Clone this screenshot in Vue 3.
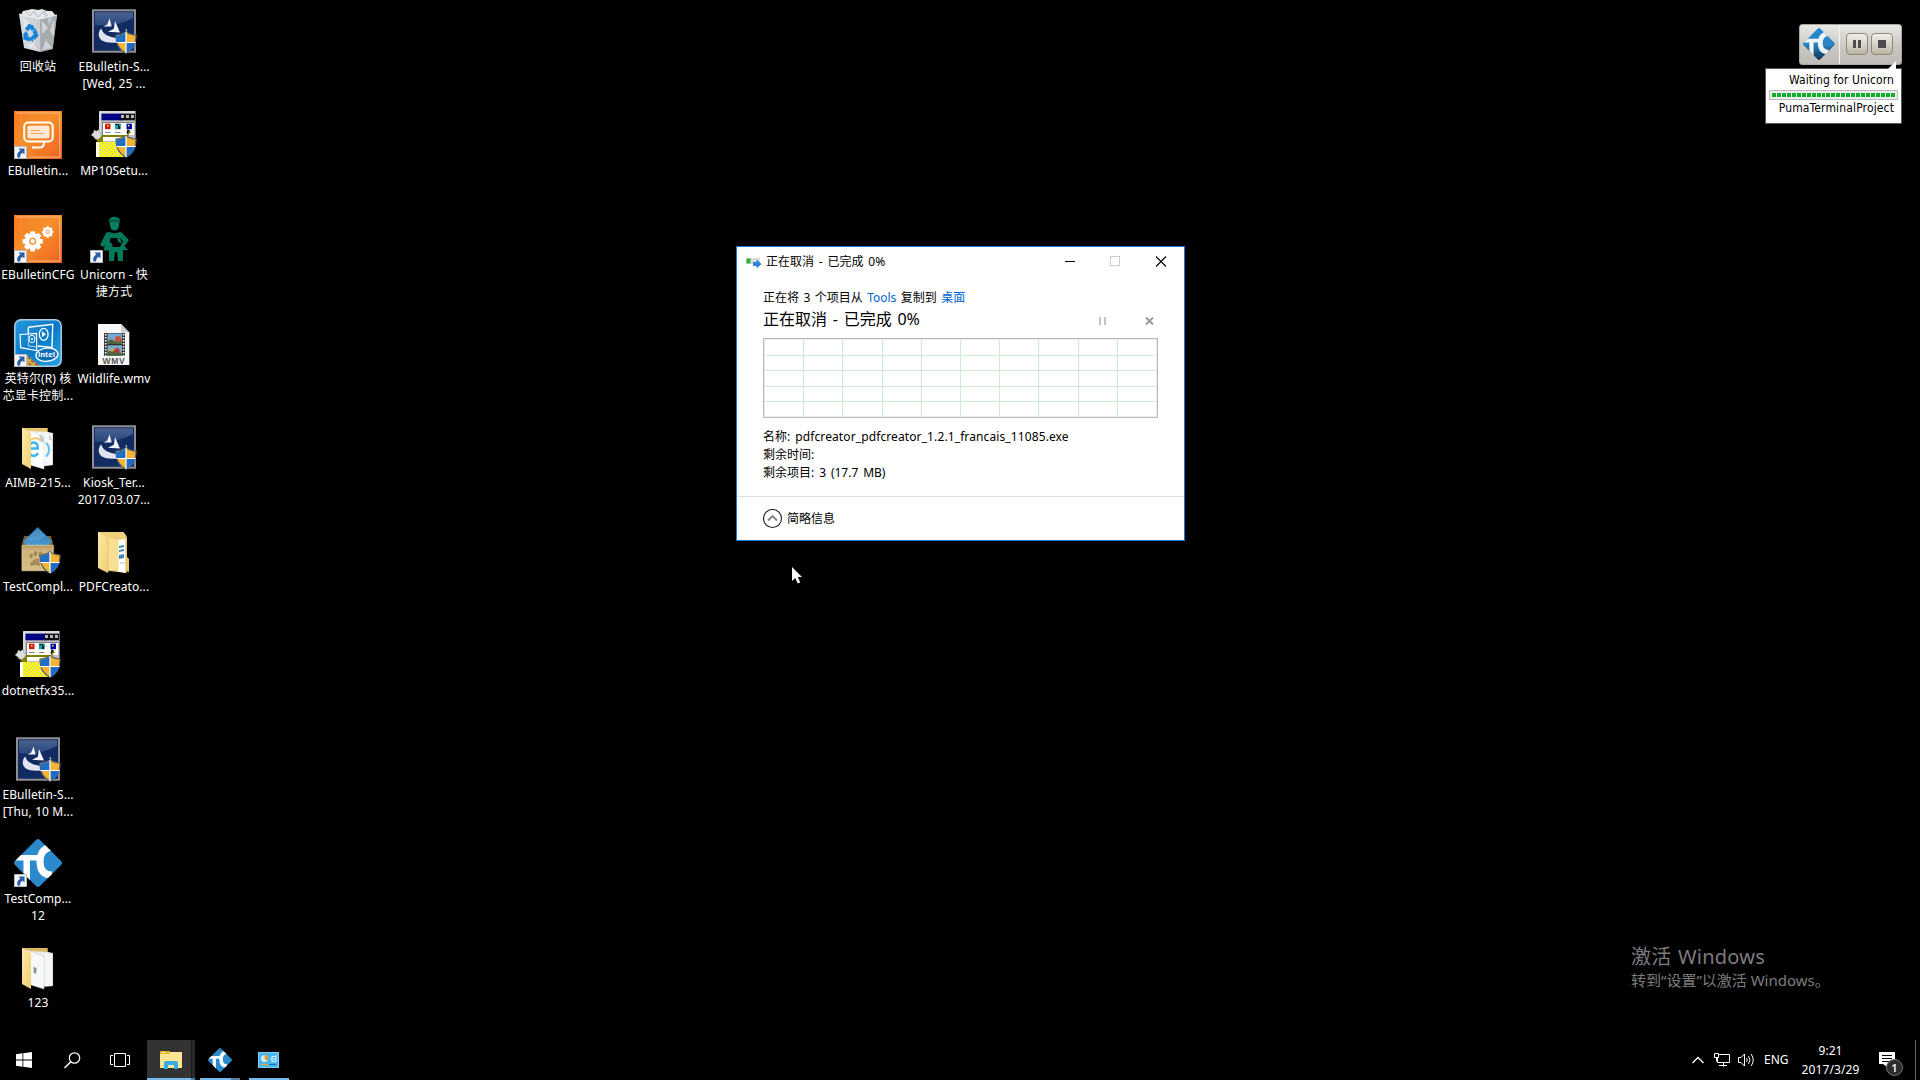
<script setup>
const columns = [
  [
    { icon: 'bin', lines: ['回收站'] },
    { icon: 'bulletin', lines: ['EBulletin...'], shortcut: true },
    { icon: 'config', lines: ['EBulletinCFG'], shortcut: true },
    { icon: 'intel', lines: ['英特尔(R) 核', '芯显卡控制...'], shortcut: true },
    { icon: 'folder-web', lines: ['AIMB-215...'] },
    { icon: 'package', lines: ['TestCompl...'], shield: true },
    { icon: 'setup', lines: ['dotnetfx35...'], shield: true },
    { icon: 'installer', lines: ['EBulletin-S...', '[Thu, 10 M...'], shield: true },
    { icon: 'tc', lines: ['TestComp...', '12'], shortcut: true },
    { icon: 'folder-doc', lines: ['123'] },
  ],
  [
    { icon: 'installer', lines: ['EBulletin-S...', '[Wed, 25 ...'], shield: true },
    { icon: 'setup', lines: ['MP10Setu...'], shield: true },
    { icon: 'unicorn', lines: ['Unicorn - 快', '捷方式'], shortcut: true },
    { icon: 'wmv', lines: ['Wildlife.wmv'] },
    { icon: 'installer', lines: ['Kiosk_Ter...', '2017.03.07...'], shield: true },
    { icon: 'folder-open', lines: ['PDFCreato...'] },
  ],
]
const gridX = [40, 79, 119, 158, 197, 236, 275, 315, 354]
const gridY = [17, 32, 48, 63]
const teeth = [0, 45, 90, 135, 180, 225, 270, 315]
</script>

<template>
  <div class="screen">
    <svg class="defs" width="0" height="0" aria-hidden="true">
      <defs>
        <linearGradient id="g-orange" x1="0" y1="0" x2="1" y2="1">
          <stop offset="0" stop-color="#f47a20" /><stop offset=".45" stop-color="#f68f2a" /><stop offset="1" stop-color="#ee6322" />
        </linearGradient>
        <linearGradient id="g-navy" x1="0" y1="0" x2="0" y2="1">
          <stop offset="0" stop-color="#4a6290" /><stop offset=".4" stop-color="#25427c" /><stop offset=".42" stop-color="#142c64" /><stop offset="1" stop-color="#1c3a78" />
        </linearGradient>
        <linearGradient id="g-intel" x1="0" y1="0" x2="1" y2="1">
          <stop offset="0" stop-color="#2a9be0" /><stop offset=".5" stop-color="#0879c4" /><stop offset="1" stop-color="#2aa4e4" />
        </linearGradient>
        <linearGradient id="g-flap" x1="0" y1="0" x2="1" y2="1">
          <stop offset="0" stop-color="#ffe9a6" /><stop offset="1" stop-color="#f0cf72" />
        </linearGradient>
        <linearGradient id="g-box" x1="0" y1="0" x2="0" y2="1">
          <stop offset="0" stop-color="#b8965a" /><stop offset=".2" stop-color="#cdb27a" /><stop offset="1" stop-color="#d8c08a" />
        </linearGradient>
        <linearGradient id="g-blue" x1="0" y1="0" x2="0" y2="1">
          <stop offset="0" stop-color="#2a71a8" /><stop offset="1" stop-color="#4d9bd4" />
        </linearGradient>
        <linearGradient id="g-tc" x1="0" y1="0" x2="0" y2="1">
          <stop offset="0" stop-color="#2188cf" /><stop offset=".5" stop-color="#2b86c2" /><stop offset="1" stop-color="#0b3354" />
        </linearGradient>
        <linearGradient id="g-bin" x1="0" y1="0" x2="1" y2="0">
          <stop offset="0" stop-color="#dcdfe2" /><stop offset=".55" stop-color="#c9cdd1" /><stop offset=".6" stop-color="#aeb3b8" /><stop offset="1" stop-color="#c6cacd" />
        </linearGradient>
        <pattern id="p-dots" width="4" height="4" patternUnits="userSpaceOnUse">
          <rect width="4" height="4" fill="#ff0" /><rect width="1.400" height="1.400" fill="#c0c0c0" /><rect x="2" y="2" width="1.400" height="1.400" fill="#c0c0c0" />
        </pattern>
        <clipPath id="c-diamond"><path d="M22 1Q24-1 26 1L47 22Q49 24 47 26L26 47Q24 49 22 47L1 26Q-1 24 1 22Z" /></clipPath>

        <symbol id="bin" viewBox="0 0 48 48">
          <path d="M7 8l2-4 5-1 4-1 6 1 4-1 5 2 5 0 4 5-8 5H12z" fill="#e4e7e9" />
          <path d="M12 5l4 4 4-5 4 6 6-6 4 5M9 8l8 3M29 4l3 6" fill="none" stroke="#b4b9bd" stroke-width="1" />
          <path d="M5 7l21 5 17-4-4.300 34L26 45 10 41z" fill="url(#g-bin)" />
          <path d="M26 12l17-4-4.300 34L26 45z" fill="#9fa5aa" opacity=".7" />
          <path d="M8 10l8 6-5 6zM28 14l6 7-6 6zM40 12l-4 12 4 6zM13 40l6-5 5 8zM28 43l4-10 6 8zM34 12l4-2-3 8z" fill="#f1f3f4" opacity=".55" />
          <path d="M5 7l21 5 17-4" fill="none" stroke="#eceeef" stroke-width="1.200" />
          <g fill="none" stroke="#1683d8" stroke-width="4.200"><path d="M12.500 23l3-3.800 3.500 1.500" /><path d="M20.500 23.500l1.500 5-3 3" /><path d="M16.500 32.500l-5-1.500.2-4" /></g>
          <path d="M17.500 18l5 5-5.500.5zM19 28v7l-4-3zM8.500 28l3.500-4 3 4.500z" fill="#1683d8" />
        </symbol>
        <symbol id="bulletin" viewBox="0 0 48 48">
          <rect width="48" height="48" fill="url(#g-orange)" />
          <path d="M7 0v48M0 9h48M17 0v9" stroke="#f8a04a" stroke-width=".6" opacity=".6" />
          <path d="M2 2h43.700v44H14" fill="none" stroke="#fbc08a" stroke-width=".9" />
          <rect x="10.200" y="11.500" width="28.500" height="19" rx="4" fill="none" stroke="#fff" stroke-width="2" />
          <rect x="13.500" y="14.800" width="22" height="12.500" rx="1.500" fill="#fde9d6" />
          <path d="M17 19.500h9M17 22.500h13" stroke="#f6a45c" stroke-width="1" />
          <path d="M30 31q0 5.500-4 5.500h-8" fill="none" stroke="#fff" stroke-width="2" />
        </symbol>
        <symbol id="gear" viewBox="-12 -12 24 24">
          <rect v-for="a in teeth" :key="a" x="-2.600" y="-11" width="5.200" height="6" rx="1" fill="#fff" :transform="`rotate(${a})`" />
          <circle r="6.400" fill="none" stroke="#fff" stroke-width="5" /><circle r="2.400" fill="#fff" />
        </symbol>
        <symbol id="config" viewBox="0 0 48 48">
          <rect width="48" height="48" fill="url(#g-orange)" />
          <path d="M7 0v48M0 9h48M17 0v9" stroke="#f8a04a" stroke-width=".6" opacity=".6" />
          <path d="M2 2h43.700v44H14" fill="none" stroke="#fbc08a" stroke-width=".9" />
          <use href="#gear" x="7.700" y="15.300" width="22" height="22" /><use href="#gear" x="27.500" y="10.800" width="12.400" height="12.400" />
        </symbol>
        <symbol id="intel" viewBox="0 0 48 48">
          <rect x=".8" y=".8" width="46.400" height="46.400" rx="6" fill="url(#g-intel)" stroke="#a9cfe6" stroke-width="1.500" />
          <path d="M12 35l6 6 8 6H12z" fill="#c3b64a" /><path d="M14 38l2 2M17 42l3 1M14 44l3 2M21 45l3 1" stroke="#d9432f" stroke-width="1.500" />
          <path d="M14.300 8.300L38.700 5.300 38 28.500 24 27M14.300 8.300V15" fill="none" stroke="#fff" stroke-width="1.400" />
          <path d="M6 15.500l16.500-1.200.3 17.200L6.700 28.700z" fill="none" stroke="#fff" stroke-width="1.200" />
          <path d="M14.300 15v12l9 1" fill="none" stroke="#d9efff" stroke-width=".8" />
          <ellipse cx="29.700" cy="15.300" rx="4.400" ry="6" fill="none" stroke="#fff" stroke-width="1.300" /><path d="M28 12.300l4 3-4 3z" fill="#fff" />
          <ellipse cx="18" cy="20" rx="3" ry="3.800" fill="none" stroke="#fff" stroke-width="1" /><circle cx="18" cy="20" r="1" fill="#fff" />
          <ellipse cx="33" cy="35.700" rx="11" ry="6.600" fill="#0a6cb4" stroke="#fff" stroke-width="1.400" transform="rotate(-5 33 36)" />
          <text x="32.500" y="38.400" text-anchor="middle" class="intel-text">intel</text>
        </symbol>
        <symbol id="folder-web" viewBox="0 0 48 48">
          <path d="M8 5h25.700v28H8z" fill="#e9c772" />
          <path d="M14 8l20 1 4.700 1v32l-9 1z" fill="#f0f2f4" /><path d="M38.700 10v32l-8 .8V11z" fill="#f7f8f9" />
          <path d="M16 8l14 6v32l-14-4z" fill="#fff" stroke="#d5d8da" stroke-width=".5" />
          <path d="M16.500 25.500h7.300q0-6-4-6t-4.800 6q0 7 4.500 7.500 3 0 4.200-3" fill="none" stroke="#3db6e8" stroke-width="2.400" />
          <path d="M16 17.500q7-5 9.500 0" fill="none" stroke="#f5b52d" stroke-width="1.400" />
          <path d="M32 20q3 2 3 6.500t-3 7" fill="none" stroke="#63c4ec" stroke-width="2" /><path d="M25.500 11.500l4.500 2.500v6l-4.500-2z" fill="#c8ccd0" /><path d="M35 10l3.700 7H35z" fill="#cfd3d6" />
          <path d="M8 5l9 5v36l-9-5z" fill="url(#g-flap)" />
        </symbol>
        <symbol id="folder-doc" viewBox="0 0 48 48">
          <path d="M8 5h25.700v28H8z" fill="#dcb962" />
          <path d="M15 8l19 1 4.700 1v33l-9 .5z" fill="#e9ebed" /><path d="M38.700 10.500V43l-8 .5V11z" fill="#f5f6f7" />
          <path d="M13 7l17 6.500V46L17 42z" fill="#f7f8f9" stroke="#c9ccd0" stroke-width=".5" />
          <path d="M19.500 24l3 1v6l-3-1z" fill="#9fb0a8" /><path d="M20 24.500l1.500 2-1 3" fill="none" stroke="#6d5a45" stroke-width=".8" />
          <path d="M8 5l9 5v36l-9-5z" fill="url(#g-flap)" />
        </symbol>
        <symbol id="folder-open" viewBox="0 0 48 48">
          <path d="M8 5h25.500l3 4v37L20 44z" fill="#efd07c" /><path d="M28 13l7.500-1v34L27 44z" fill="#fff" />
          <path d="M29 19l5-1v2l-5 1zM29 23l5-1v2l-5 1zM29 28l5-1v4l-5 1z" fill="#3b87bd" /><path d="M30 36h5" stroke="#bbb" />
          <path d="M35.500 10h1.500v20l2 2v13l-3.500-1z" fill="#e8c873" />
          <path d="M13 8l15 4.500V43l-12 1z" fill="#f8df94" stroke="#e3c06a" stroke-width=".5" />
          <path d="M8 5l10 5.500V46l-10-5z" fill="url(#g-flap)" /><path d="M18 10.500V46" stroke="#dcb960" stroke-width=".6" />
        </symbol>
        <symbol id="package" viewBox="0 0 48 48">
          <path d="M8 17l2-8h27l2 8v3H8z" fill="#7d6030" />
          <path d="M23.700 0L38.300 14.500 34 19H13l-4-4.500z" fill="url(#g-blue)" /><path d="M23.700 1L11.500 13.500q12 2 20-4.500z" fill="#74b3e2" opacity=".35" />
          <path d="M8 18.300h31.300v25.400H8z" fill="url(#g-box)" stroke="#e2cd98" stroke-width=".8" />
          <g fill="#a88b58"><ellipse cx="17" cy="29" rx="1.800" ry="2.600" /><ellipse cx="21.500" cy="26.500" rx="1.800" ry="2.600" /><ellipse cx="26.500" cy="27" rx="1.800" ry="2.600" /><path d="M16 37q4-6 9-5l1 7q-5-2-8 0-3-1-2-2z" /></g>
        </symbol>
        <symbol id="setup" viewBox="0 0 48 48">
          <path d="M9 0h37v31H9z" fill="#c0c0c0" /><path d="M10 1h35M10 1v29" stroke="#f4f4f4" /><path d="M45.500 0v31" stroke="#707070" />
          <path d="M11.500 2.700h21v6.600h-21z" fill="#000084" /><path d="M30.500 2.700h14.500v6.600H30.500z" fill="#101018" />
          <path d="M31 4h3v3h-3zm5 0h3v3h-3zm5 0h3v3h-3z" fill="#b8b8b8" />
          <path d="M12 11h32v13H12z" fill="#fff" /><path d="M12 11.500h32M12.500 11v13" stroke="#808080" />
          <path d="M15 12.700h5.500v5.500H15z" fill="#d01818" /><path d="M17 14h1.500v1.500H17z" fill="#ff0" />
          <path d="M25 12.700h5.500v5.500H25z" fill="#123" /><path d="M25 14h3v4h-3zM29 13h2v2h-2z" fill="#0aa" />
          <path d="M36.500 12.700h5.500v5.500h-5.500z" fill="#0000b0" /><path d="M38 14h1.500v1.500H38z" fill="#ff0" />
          <path d="M15 21.500h5.500M25 21.500h5.500M36 21.500h5" stroke="#888" />
          <path d="M37 18.500l3 .5-1 4h-2z" fill="#202010" />
          <path d="M12 25.300h20v4.700H12z" fill="#fff" />
          <path d="M10 24h27l2-4 1 .5-2 5.500H13v5H8l-5-5z" fill="#808000" />
          <path d="M1 24l2.500-2.500L4 19l2.500 1L9 18.500l.8 3L12 24l-1.500 2.500L8 28.500l-3-1-1-1.500z" fill="#dcdcdc" stroke="#777" stroke-width=".7" stroke-dasharray="1 1" />
          <path d="M6 31h3.500v15H6z" fill="#fff" /><path d="M9 31h25v15H9z" fill="url(#p-dots)" />
        </symbol>
        <symbol id="installer" viewBox="0 0 48 48">
          <path d="M2 2.300h44v43.400H2z" fill="#8f8f93" /><path d="M4 4.300h40v39.400H4z" fill="#142a5c" /><path d="M5 5.300h38v37.400H5z" fill="url(#g-navy)" />
          <path d="M5 18q20 3 38-7v31.700H5z" fill="#132b63" />
          <path d="M19.500 11.500l2.200 8h-8.200l3.700-2z M25 14l5 11.500-12-.8 5.800-3z" fill="#f2f5fa" />
          <path d="M11.500 21.500Q12.500 29 27 31v4.500Q9 37 8.700 27.500 9 23 11.500 21.500z" fill="#dfe4ee" /><path d="M36 22l1 4" stroke="#dfe4ee" stroke-width="1" />
        </symbol>
        <symbol id="unicorn" viewBox="0 0 48 48">
          <path d="M19 5Q20 2 24.500 1.700 29 2 30 5l-.5 3h-10z" fill="#00795a" /><path d="M20 8h9v3q-1 4.500-4.500 4.500T20 11z" fill="#087f60" /><path d="M20 6.300q4.500-1.500 9.500 0" fill="none" stroke="#033" stroke-width=".9" />
          <path d="M19 17l5 1.500 6-1.500q2 0 3 2l6 6-4.500 6 3.500 4H33v11h-5l-1-9h-2l-1 9h-5V35.500h-5.500L16 27l-2 5-4-2 5-10q1-3 4-3z" fill="#007a5a" />
          <path d="M20 23h10l3 3-3 6H20z" fill="#000" /><circle cx="19.500" cy="30.500" r="3" fill="#007a5a" /><path d="M27 22.500q5 1 4 6l-3-2z" fill="#007a5a" />
        </symbol>
        <symbol id="wmv" viewBox="0 0 48 48">
          <path d="M8 5h23l8.300 8.500V46H8z" fill="#f8f8f8" /><path d="M31 5v8.500h8.300z" fill="#cfcfcf" />
          <path d="M14 14h21v23H14z" fill="#333" /><path d="M17.500 14.500H32v10.500H17.500zm0 11.700H32v10.500H17.500z" fill="#79a9cf" />
          <path d="M17.500 22q4-3 7 0l7-2v5h-14zM17.500 33q5-3 14 1v2.700h-14z" fill="#4e6540" /><circle cx="28" cy="20" r="3" fill="#cf5138" /><circle cx="27" cy="31.500" r="2.600" fill="#b83b31" /><circle cx="22" cy="31" r="1.800" fill="#d7a92e" />
          <path d="M15.700 15v22M33.600 15v22" stroke="#fff" stroke-width="1.700" stroke-dasharray="1.500 1.500" />
          <text x="24" y="44.500" text-anchor="middle" class="wmv-text">WMV</text>
        </symbol>
        <g id="tc-letters" clip-path="url(#c-diamond)" fill="none" stroke="#fff">
          <path d="M0 18.800h25" stroke-width="5.600" /><path d="M12.700 19v26" stroke-width="6.400" /><path d="M38 8Q26 9.500 26 22.500 26 36 38 36" stroke-width="7" />
        </g>
        <symbol id="tc" viewBox="0 0 48 48"><path clip-path="url(#c-diamond)" d="M0 0h48v48H0z" fill="#2a8acb" /><use href="#tc-letters" /></symbol>
        <symbol id="tc-glossy" viewBox="0 0 48 48"><path clip-path="url(#c-diamond)" d="M0 0h48v48H0z" fill="url(#g-tc)" /><use href="#tc-letters" opacity=".93" /></symbol>
        <symbol id="shield" viewBox="0 0 22 23">
          <path d="M11 .7Q14 3.300 21 4.200 21.500 17 11 22.300.5 17 1 4.200 8 3.300 11 .7z" fill="#f7b334" stroke="#5a6068" stroke-width="1.200" />
          <path d="M11 1.500v10H1.500Q1 8 1.500 4.700 8 4 11 1.500z" fill="#1e6fc4" /><path d="M11 11.500h9.400Q18.500 18.500 11 21.700z" fill="#1e6fc4" />
          <path d="M11 1v21M1.300 11.500h19.400" stroke="#fff" stroke-width="1.200" />
        </symbol>
        <symbol id="shortcut" viewBox="0 0 13 13">
          <path d="M.5.500h12v12H.5z" fill="#f5f6f7" stroke="#b9babb" /><path d="M4.500 2.500H10.500v6L8.600 6.800Q5.700 8 6.300 11.500H3.500Q2 7 6.400 4.500z" fill="#2b5ea8" />
        </symbol>
      </defs>
    </svg>

    <main class="desktop">
      <div v-for="(column, c) in columns" :key="c" class="column">
        <div v-for="(item, i) in column" :key="i" class="item">
          <div class="picture">
            <svg class="icon"><use :href="'#' + item.icon" /></svg>
            <svg v-if="item.shield" class="shield"><use href="#shield" /></svg>
            <svg v-if="item.shortcut" class="shortcut"><use href="#shortcut" /></svg>
          </div>
          <div v-for="line in item.lines" :key="line" class="label">{{ line }}</div>
        </div>
      </div>
    </main>

    <section class="dialog">
      <header class="titlebar">
        <svg class="copy-icon" width="16" height="12" viewBox="0 0 16 12">
          <path d="M0 1h14v6H0z" fill="#d9dcdf" /><path d="M.5 1.500h4v5h-4z" fill="#27b03a" /><path d="M7 5h3.500V2.500L15.500 7l-5 4.500V9H7z" fill="#2b86d9" />
        </svg>
        <span class="title">正在取消 - 已完成 0%</span>
        <svg class="controls" width="102" height="11" viewBox="0 0 102 11">
          <path d="M0 5.500h10" stroke="#000" /><rect x="45.500" y=".5" width="9" height="9" fill="none" stroke="#ccc" /><path d="M91 .5l10 10m0-10l-10 10" stroke="#000" stroke-width="1.100" />
        </svg>
      </header>
      <div class="body">
        <p class="source">正在将 3 个项目从 <a>Tools</a> 复制到 <a>桌面</a></p>
        <div class="status">
          <span class="status-text">正在取消 - 已完成 0%</span>
          <svg class="ops" width="56" height="8" viewBox="0 0 56 8">
            <path d="M1 0v8M6 0v8" stroke="#c4c4c4" stroke-width="2" /><path d="M47 .5l7 7m0-7l-7 7" stroke="#999" stroke-width="2" />
          </svg>
        </div>
        <svg class="chart" width="395" height="80" viewBox="0 0 395 80">
          <rect x=".5" y=".5" width="394" height="79" fill="#fff" stroke="#b8b8b8" /><rect x="1.500" y="1.500" width="392" height="77" fill="none" stroke="#ebebeb" />
          <path v-for="x in gridX" :key="'x' + x" :d="`M${x + 0.5} 2v76`" stroke="#c8edd1" />
          <path v-for="y in gridY" :key="'y' + y" :d="`M2 ${y + 0.5}h390`" stroke="#c8edd1" />
        </svg>
        <dl class="facts">
          <div><dt>名称:</dt><dd class="file">pdfcreator_pdfcreator_1.2.1_francais_11085.exe</dd></div>
          <div><dt>剩余时间:</dt></div>
          <div><dt>剩余项目:</dt><dd class="amount">3 (17.7 MB)</dd></div>
        </dl>
      </div>
      <footer class="footer">
        <svg width="20" height="20" viewBox="0 0 20 20"><circle cx="9.500" cy="9.500" r="9" fill="none" stroke="#222" stroke-width="1.100" /><path d="M5 11.500L9.500 7l4.500 4.500" fill="none" stroke="#858585" stroke-width="1.800" /></svg>
        <span>简略信息</span>
      </footer>
    </section>

    <aside class="indicator">
      <div class="toolbar">
        <div class="brand"><svg width="32" height="32"><use href="#tc-glossy" /></svg></div>
        <div class="buttons">
          <span class="btn"><svg width="10" height="8"><path d="M1 0h3v8H1zm5 0h3v8H6z" fill="#4c4c4c" /></svg></span>
          <span class="btn"><svg width="8" height="8"><path d="M0 0h8v8H0z" fill="#4c4c4c" /></svg></span>
        </div>
      </div>
      <div class="balloon">
        <svg class="pointer" width="9" height="8" viewBox="0 0 9 8"><path d="M0 8L8 0v8z" fill="#fff" /></svg>
        <div class="task">Waiting for Unicorn</div>
        <div class="progress"><i v-for="n in 25" :key="n" /></div>
        <div class="project">PumaTerminalProject</div>
      </div>
    </aside>

    <div class="watermark">
      <div class="big">激活 Windows</div>
      <div class="small">转到“设置”以激活 Windows。</div>
    </div>

    <svg class="cursor" width="12" height="18" viewBox="0 0 12 18"><path d="M0 0v14l3.200-3 2.600 5.500 2.400-1L5.800 10H10z" fill="#fff" /></svg>

    <nav class="taskbar">
      <div class="start"><svg width="16" height="16" viewBox="0 0 16 16"><path d="M0 2.200L6.500 1.300v6.200H0zM7.300 1.200L16 0v7.500H7.300zM0 8.400h6.500v6.300L0 13.800zM7.300 8.400H16V16l-8.700-1.200z" fill="#fff" /></svg></div>
      <div class="search"><svg width="17" height="17" viewBox="0 0 17 17"><circle cx="10.500" cy="6" r="5.200" fill="none" stroke="#fff" stroke-width="1.300" /><path d="M6.800 9.700L.5 16" stroke="#fff" stroke-width="1.500" /></svg></div>
      <div class="views"><svg width="20" height="14" viewBox="0 0 20 14"><path d="M4.500.5h11v13h-11zM3 2.500H.5v9H3M17 2.500h2.500v9H17" fill="none" stroke="#fff" /></svg></div>
      <div class="app explorer">
        <svg width="22" height="18" viewBox="0 0 22 18"><path d="M0 0h9l1 1h12v16H0z" fill="#ffe694" /><path d="M0 0h9l1 1-1 2H0z" fill="#e8b526" /><path d="M2 1.500h3" stroke="#fff" /><path d="M4 18v-6q0-2 2-2h10q2 0 2 2v6h-4v-4H8v4z" fill="#35ade4" /></svg>
      </div>
      <div class="app tc"><svg width="24" height="24"><use href="#tc" /></svg></div>
      <div class="app panel">
        <svg width="21" height="16" viewBox="0 0 21 16"><rect x=".5" y=".5" width="20" height="15" fill="#45b6ef" stroke="#7fd0f7" /><circle cx="6.500" cy="6.500" r="3.500" fill="#cfeafa" /><path d="M6.500 6.500V2.800a3.700 3.700 0 0 1 2.600 6.300z" fill="#f39a2d" /><path d="M12 7h2M14 4v6M14 4.500h4M14 7h4M14 9.500h4M18 3v7" stroke="#d4effc" stroke-width="1" fill="none" /><path d="M3 12.500h7" stroke="#f3a52d" stroke-width="1.300" /><path d="M11 12.500h7" stroke="#1472ac" stroke-width="1" /></svg>
      </div>
      <div class="tray">
        <svg class="chevron" width="12" height="8" viewBox="0 0 12 8"><path d="M.5 7L6 1.500 11.500 7" fill="none" stroke="#fff" stroke-width="1.300" /></svg>
        <svg class="network" width="16" height="14" viewBox="0 0 16 14"><path d="M4.500 1.500h11v8h-12V5M9.500 9.500v4M5 12.500h8M.5.500h4v4h-4zM2.500 4.500v4" fill="none" stroke="#fff" /></svg>
        <svg class="sound" width="17" height="14" viewBox="0 0 17 14"><path d="M.5 4.500h2.500l3.500-3.500v12L3 9.500H.5z" fill="none" stroke="#fff" /><path d="M8.500 5q1.500 2 0 4M10.500 3q3 4 0 8M13 1q4.500 6 0 12" fill="none" stroke="#fff" /></svg>
        <span class="lang">ENG</span>
        <div class="clock"><span class="time">9:21</span><span class="date">2017/3/29</span></div>
        <div class="notice">
          <svg width="16" height="16" viewBox="0 0 16 16"><path d="M0 0h16v12H8v3l-4-3H0z" fill="#fff" /><path d="M3 3.500h10M3 6.500h10M3 9.500h7" stroke="#000" /></svg>
          <span class="badge">1</span>
        </div>
        <div class="peek" />
      </div>
    </nav>
  </div>
</template>

<style>
body { background: #000; overflow: hidden; }
</style>

<style scoped>
.screen { position: relative; display: flex; flex-direction: column; width: 1920px; height: 1080px; overflow: hidden; background: #000; color: #fff; font: 12px/17px "Noto Sans", "Noto Sans CJK SC", sans-serif; }
.defs { position: absolute; }
svg { display: block; flex: none; }
.intel-text { font: bold 7.500px "Noto Sans", sans-serif; fill: #fff; }
.wmv-text { font: bold 8.500px "Liberation Sans", sans-serif; fill: #555; letter-spacing: .8px; }
.desktop { flex: 1; display: flex; align-items: flex-start; padding-top: 7px; height: 1033px; }
.column { width: 76px; display: flex; flex-direction: column; }
.item { height: 104px; display: flex; flex-direction: column; align-items: center; }
.picture { position: relative; width: 48px; height: 48px; margin-bottom: 3px; flex: none; }
.icon { width: 48px; height: 48px; }
.shield { position: absolute; right: 1px; bottom: 1px; width: 22px; height: 23px; }
.shortcut { position: absolute; left: 0; bottom: 0; width: 13px; height: 13px; }
.label { white-space: nowrap; height: 17px; letter-spacing: .1px; }

.dialog { position: absolute; left: 736px; top: 246px; width: 449px; height: 295px; box-sizing: border-box; border: 1px solid #1979ca; background: #fff; color: #000; display: flex; flex-direction: column; }
.titlebar { display: flex; align-items: center; height: 29px; padding: 0 17px 0 9px; }
.copy-icon { margin-top: 2px; }
.title { margin-left: 4px; flex: 1; word-spacing: 1.700px; }
.body { padding: 13px 26px 0; height: 207px; }
.source { margin: 0; height: 18px; line-height: 18px; white-space: nowrap; word-spacing: 1.300px; }
.source a { color: #0066cc; }
.status { display: flex; align-items: flex-start; justify-content: space-between; height: 26px; padding-right: 3px; }
.status-text { font-size: 16px; line-height: 24px; word-spacing: 1.600px; }
.ops { margin-top: 10px; }
.chart { margin-top: 5px; }
.facts { margin: 10px 0 0; }
.facts div { display: flex; height: 18px; line-height: 18px; white-space: nowrap; }
.facts dd { margin: 0 0 0 5px; }
.file { letter-spacing: .11px; }
.amount { word-spacing: 1.700px; }
.footer { border-top: 1px solid #dfdfdf; flex: 1; display: flex; align-items: center; gap: 4px; padding-left: 26px; }

.indicator { position: absolute; left: 1765px; top: 24px; width: 137px; display: flex; flex-direction: column; align-items: flex-end; }
.toolbar { box-sizing: border-box; width: 103px; height: 41px; display: flex; border: 1px solid #aaa69f; border-radius: 3px; background: linear-gradient(#e9e7e4, #c9c6c1 60%, #bfbcb8); }
.brand { width: 40px; border-right: 1px solid #f4f3f1; display: flex; align-items: center; padding: 0 0 2px 3px; box-sizing: border-box; }
.buttons { display: flex; flex: 1; gap: 3px; padding: 8px 0 0 6px; }
.btn { box-sizing: border-box; width: 22px; height: 22px; display: flex; align-items: center; justify-content: center; border: 1px solid #8f8878; border-radius: 4px; background: linear-gradient(#f1efeb, #d3cec3 60%, #b9b2a2); }
.balloon { position: relative; box-sizing: border-box; width: 137px; height: 56px; margin-top: 3px; padding: 3px 3px 0; border: 1px solid #555; background: #fff; color: #000; font: 12px/16px "DejaVu Sans Condensed", "DejaVu Sans", sans-serif; }
.pointer { position: absolute; right: 4px; top: -8px; }
.task, .project { text-align: right; padding-right: 4px; white-space: nowrap; letter-spacing: .08px; }
.progress { box-sizing: border-box; width: 129px; height: 10px; margin: 2px 0 0; border: 1px solid #b9b9b9; background: #eee; padding: 2px; display: flex; gap: 1px; }
.progress i { width: 4px; height: 4px; background: #0cb12a; }
.project { letter-spacing: .14px; }

.watermark { position: absolute; left: 1631px; top: 943px; color: #7d7d7d; white-space: nowrap; }
.big { font-size: 20px; line-height: 28px; letter-spacing: .25px; word-spacing: 1px; }
.small { font-size: 15px; line-height: 18px; }
.cursor { position: absolute; left: 792px; top: 567px; }

.taskbar { height: 40px; display: flex; align-items: stretch; }
.taskbar > div { display: flex; align-items: center; box-sizing: border-box; }
.start { width: 64px; padding-left: 16px; }
.search { width: 46px; }
.views { width: 37px; }
.app { position: relative; justify-content: center; }
.app::after { content: ""; position: absolute; left: 0; right: 0; bottom: 0; height: 2px; background: #76b9ed; }
.explorer { width: 48px; background: linear-gradient(90deg, #333 44px, #181818 44px 45px, #292929 45px); padding-right: 1px; }
.explorer::after { background: linear-gradient(90deg, #76b9ed 44px, #4f7fa6 44px); }
.tc { width: 40px; margin-left: 5px; }
.tc::after { background: linear-gradient(90deg, #76b9ed 31px, #567fa3 31px); }
.panel { width: 40px; margin-left: 9px; }
.taskbar > .panel { padding-right: 1px; }
.taskbar > .tray { margin-left: auto; align-items: stretch; }
.tray > svg, .lang { align-self: center; }
.network { margin-left: 10px; }
.sound { margin-left: 8px; }
.lang { margin-left: 9px; width: 26px; padding-bottom: 1px; }
.clock { margin-left: 6px; width: 69px; display: flex; flex-direction: column; align-items: center; padding-top: 1px; line-height: 19px; }
.date { letter-spacing: .12px; }
.notice { position: relative; margin: 12px 20px 0 14px; width: 16px; }
.badge { position: absolute; left: 7px; top: 7px; width: 17px; height: 17px; box-sizing: border-box; border: 1px solid #777; border-radius: 50%; background: #2b2b2b; text-align: center; line-height: 15px; font-weight: 600; font-size: 11px; }
.peek { width: 5px; box-sizing: border-box; border-left: 1px solid #666; }
</style>
